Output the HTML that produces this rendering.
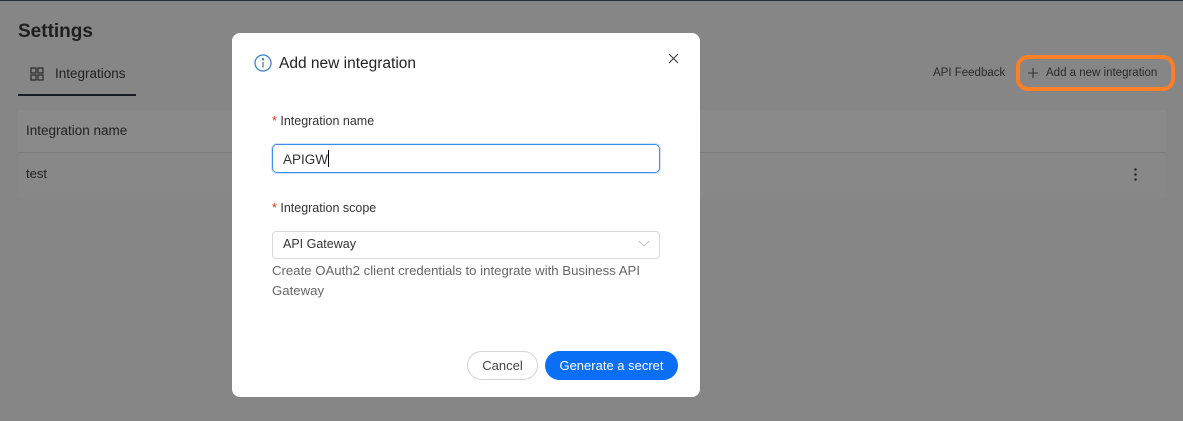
<!DOCTYPE html>
<html><head><style>
*{box-sizing:border-box;margin:0;padding:0}
body{width:1183px;height:421px;overflow:hidden;background:#868686;font-family:"Liberation Sans",sans-serif;position:relative;color:#1a1a1a}
.a{position:absolute}
</style></head><body>
<div class="a" style="left:0;top:0;width:1183px;height:1px;background:#2a2f36"></div>
<div class="a" style="left:18px;top:21px;font-size:19px;font-weight:bold;color:#1e1e1e">Settings</div>
<svg class="a" style="left:30px;top:67px" width="14" height="14" viewBox="0 0 14 14" fill="none" stroke="#2a2a2a" stroke-width="1.2"><rect x="1" y="1" width="5" height="5"/><rect x="8" y="1" width="5" height="5"/><rect x="1" y="8" width="5" height="5"/><rect x="8" y="8" width="5" height="5"/></svg>
<div class="a" style="left:55px;top:66px;font-size:13.5px;color:#222">Integrations</div>
<div class="a" style="left:18px;top:94px;width:118px;height:2px;background:#1a1d22"></div>
<div class="a" style="left:18px;top:110px;width:1148px;height:42px;background:#8a8a8a"></div>
<div class="a" style="left:18px;top:152px;width:1148px;height:1px;background:#7d7d7d"></div>
<div class="a" style="left:18px;top:153px;width:1148px;height:45px;background:#888"></div>
<div class="a" style="left:26px;top:123px;font-size:13.5px;color:#222">Integration name</div>
<div class="a" style="left:26px;top:166px;font-size:13px;color:#222">test</div>
<div class="a" style="left:1134px;top:167px;width:3px;height:14px;background:radial-gradient(circle,#222 1.2px,transparent 1.3px) 0 0/3px 5px"></div>
<div class="a" style="left:933px;top:67px;font-size:11.5px;color:#2a2a2a">API Feedback</div>
<div class="a" style="left:1016px;top:55px;width:159px;height:36px;border:4px solid #ff7f27;border-radius:12px"></div>
<svg class="a" style="left:1027px;top:67px" width="12" height="12" viewBox="0 0 12 12" stroke="#333" stroke-width="1.1"><path d="M6 1v10M1 6h10"/></svg>
<div class="a" style="left:1046px;top:67px;font-size:11.5px;color:#2a2a2a">Add a new integration</div>

<div class="a" style="left:232px;top:33px;width:468px;height:364px;background:#fff;border-radius:8px"></div>
<svg class="a" style="left:254px;top:54px" width="18" height="18" viewBox="0 0 18 18" fill="none" stroke="#3a7fc4" stroke-width="1.3"><circle cx="9" cy="9" r="8"/><line x1="9" y1="8" x2="9" y2="13.5"/><circle cx="9" cy="5.3" r=".6" fill="#3a7fc4"/></svg>
<div class="a" style="left:279px;top:55px;font-size:15.5px;color:#222">Add new integration</div>
<svg class="a" style="left:668px;top:53px" width="11" height="11" viewBox="0 0 11 11" stroke="#444" stroke-width="1.2"><path d="M1 1l9 9M10 1l-9 9"/></svg>
<div class="a" style="left:272px;top:114px;font-size:12.5px;color:#333"><span style="color:#d0331f">*</span> Integration name</div>
<div class="a" style="left:272px;top:144px;width:388px;height:29px;border:1px solid #3b8ee8;border-radius:5px;box-shadow:0 0 0 1px #cfe3fa"></div>
<div class="a" style="left:283px;top:150px;font-size:13.5px;color:#333">APIGW<span style="display:inline-block;width:1px;height:17px;background:#000;vertical-align:-3px"></span></div>
<div class="a" style="left:272px;top:201px;font-size:12.5px;color:#333"><span style="color:#d0331f">*</span> Integration scope</div>
<div class="a" style="left:272px;top:231px;width:388px;height:28px;border:1px solid #d9d9d9;border-radius:4px"></div>
<div class="a" style="left:283px;top:237px;font-size:12.5px;color:#333">API Gateway</div>
<svg class="a" style="left:638px;top:240px" width="12" height="8" viewBox="0 0 12 8" fill="none" stroke="#bbb" stroke-width="1"><path d="M1 1l5 5 5-5"/></svg>
<div class="a" style="left:272px;top:261px;width:390px;font-size:13.2px;line-height:20px;color:#666">Create OAuth2 client credentials to integrate with Business API Gateway</div>
<div class="a" style="left:467px;top:351px;width:71px;height:29px;border:1px solid #d4d4d4;border-radius:15px;font-size:13px;color:#444;text-align:center;line-height:27px">Cancel</div>
<div class="a" style="left:545px;top:351px;width:133px;height:29px;background:#0a6ff5;border-radius:15px;font-size:13px;color:#fff;text-align:center;line-height:29px">Generate a secret</div>
</body></html>
